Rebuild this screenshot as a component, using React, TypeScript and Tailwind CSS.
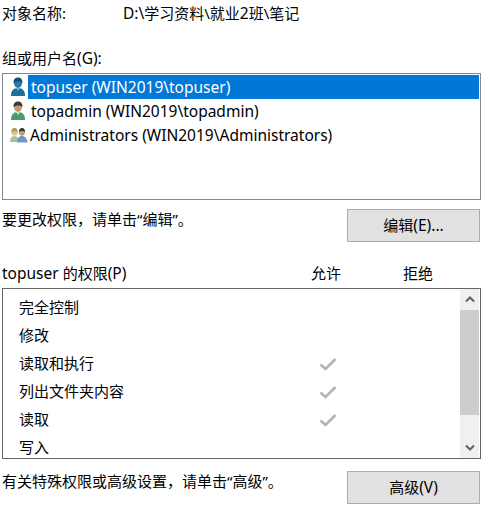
import type { ReactNode } from 'react';

const font = { fontFamily: '"Noto Sans", "Noto Sans CJK SC", sans-serif' };

// latin runs sit a bit wider than the CJK ones in the screenshot
function L({ children }: { children: ReactNode }) {
  return <span className="text-[15.5px]">{children}</span>;
}

function SingleUser({ shirt, hair, skin, collar }: { shirt: string; hair: string; skin: string; collar: string }) {
  return (
    <svg width="16" height="20" viewBox="0 0 16 20" className="shrink-0">
      <path d="M1 19c0-5 2-8 7-8s7 3 7 8z" fill={shirt} />
      <path d="M6 11l2 3 2-3z" fill={collar} />
      <ellipse cx="8" cy="6" rx="4" ry="5" fill={skin} />
      <path d="M3.600 6C3 2.500 5.500 0.500 8 0.500S13 2.500 12.400 6C11 4 6 3.800 3.600 6z" fill={hair} />
    </svg>
  );
}

function GroupUser() {
  return (
    <svg width="18" height="16" viewBox="0 0 18 16" className="shrink-0">
      <path d="M0 15c0-4 1.500-6 4.500-6S9 11 9 15z" fill="#a9c48f" />
      <ellipse cx="4.500" cy="5" rx="3" ry="3.800" fill="#e0c28f" />
      <path d="M1.500 6C1 2 3 1 4.500 1S8 2 7.500 6C6.500 4 3 3.500 1.500 6z" fill="#b59a5c" />
      <path d="M7 15.500c0-4 2-6.500 5-6.500s5 2.500 5.500 6.500z" fill="#6f96c4" />
      <ellipse cx="12" cy="5" rx="3" ry="3.800" fill="#c49a73" />
      <path d="M9 5C9 2 10.500 1 12 1s3 1 3 4C14 3.500 10.500 3.500 9 5z" fill="#2f3a45" />
    </svg>
  );
}

function Check() {
  return (
    <svg width="18" height="14" viewBox="0 0 18 14" className="mt-[1px]">
      <path d="M1.500 7.500L6.500 12L16.500 2" fill="none" stroke="#b4b4b4" strokeWidth="2.600" />
    </svg>
  );
}

function WinButton({ children }: { children: ReactNode }) {
  return (
    <div className="w-[133px] h-[33px] mr-[1px] pb-[2px] bg-[#e1e1e1] border border-[#adadad] flex items-center justify-center text-[15px] text-black">
      {children}
    </div>
  );
}

const perms = [
  { name: '完全控制', allow: false },
  { name: '修改', allow: false },
  { name: '读取和执行', allow: true },
  { name: '列出文件夹内容', allow: true },
  { name: '读取', allow: true },
  { name: '写入', allow: false },
];

export default function App() {
  return (
    <div style={font} className="w-[491px] h-[516px] bg-white overflow-hidden text-[15px] leading-[20px] text-black pl-[2px] pr-[10px] pt-[3px]">
      <div className="flex h-[20px]">
        <span className="w-[121px]">对象名称:</span>
        <span>
          <L>D:\</L>学习资料\就业<L>2</L>班\笔记
        </span>
      </div>
      <div className="mt-[25px] h-[20px]">
        组或用户名<L>(G):</L>
      </div>
      <div className="mt-[5px] h-[127px] border border-[#828790] pt-[1px] pr-[1px]">
        <div className="flex items-center h-[24px]">
          <div className="w-[25px] flex justify-end pr-[2px]">
            <SingleUser shirt="#1d6f9c" hair="#17506f" skin="#2a7ba6" collar="#7fb3cf" />
          </div>
          <div className="flex-1 h-[24px] bg-[#0078d7] text-white pl-[3px] leading-[24px]">
            <L>topuser (WIN2019\topuser)</L>
          </div>
        </div>
        <div className="flex items-center h-[24px]">
          <div className="w-[25px] flex justify-end pr-[2px]">
            <SingleUser shirt="#4d9a6a" hair="#3a3a32" skin="#c49a73" collar="#cfe3d8" />
          </div>
          <div className="pl-[3px]">
            <L>topadmin (WIN2019\topadmin)</L>
          </div>
        </div>
        <div className="flex items-center h-[24px]">
          <div className="w-[25px] flex justify-end">
            <GroupUser />
          </div>
          <div className="pl-[2px]">
            <L>Administrators (WIN2019\Administrators)</L>
          </div>
        </div>
      </div>
      <div className="flex justify-between mt-[9px] h-[33px]">
        <span>要更改权限，请单击“编辑”。</span>
        <WinButton>
          编辑<L>(E)...</L>
        </WinButton>
      </div>
      <div className="flex mt-[21px] h-[20px]">
        <span className="w-[309px]">
          <L>topuser </L>的权限<L>(P)</L>
        </span>
        <span className="w-[92px]">允许</span>
        <span>拒绝</span>
      </div>
      <div className="mt-[5px] h-[171px] border border-[#666666] flex overflow-hidden">
        <div className="flex-1 pt-[4px]">
          {perms.map((p) => (
            <div key={p.name} className="flex items-center h-[28px]">
              <span className="w-[316px] pl-[16px]">{p.name}</span>
              {p.allow && <Check />}
            </div>
          ))}
        </div>
        <div className="w-[19px] mr-[1px] flex flex-col bg-[#f0f0f0]">
          <div className="h-[21px] flex items-center justify-center">
            <svg width="10" height="7" viewBox="0 0 10 7">
              <path d="M1 5.500L5 1.500L9 5.500" fill="none" stroke="#606060" strokeWidth="2" />
            </svg>
          </div>
          <div className="h-[105px] bg-[#cdcdcd]" />
          <div className="flex-1 flex items-end justify-center pb-[7px]">
            <svg width="10" height="7" viewBox="0 0 10 7">
              <path d="M1 1.500L5 5.500L9 1.500" fill="none" stroke="#606060" strokeWidth="2" />
            </svg>
          </div>
        </div>
      </div>
      <div className="flex justify-between mt-[12px] h-[33px]">
        <span>有关特殊权限或高级设置，请单击“高级”。</span>
        <WinButton>
          高级<L>(V)</L>
        </WinButton>
      </div>
    </div>
  );
}
